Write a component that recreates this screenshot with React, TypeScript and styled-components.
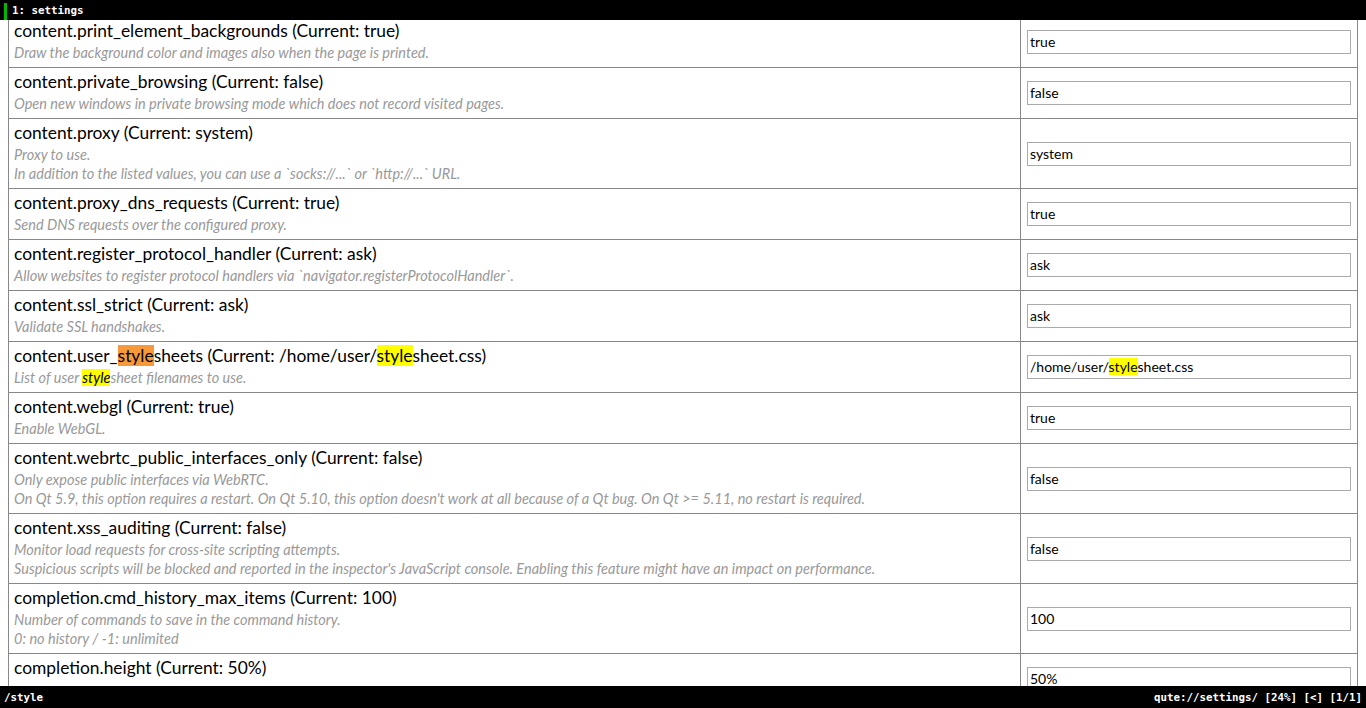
import React from 'react'
import styled, { createGlobalStyle } from 'styled-components'

type Mark = 'none' | 'current' | 'match'
type Piece = [string, Mark]

interface Setting {
  name: Piece[]
  desc: Piece[][]
  value: Piece[]
}

const t = (s: string): Piece[] => [[s, 'none']]

const settings: Setting[] = [
  {
    name: t('content.print_element_backgrounds (Current: true)'),
    desc: [t('Draw the background color and images also when the page is printed.')],
    value: t('true'),
  },
  {
    name: t('content.private_browsing (Current: false)'),
    desc: [t('Open new windows in private browsing mode which does not record visited pages.')],
    value: t('false'),
  },
  {
    name: t('content.proxy (Current: system)'),
    desc: [
      t('Proxy to use.'),
      t('In addition to the listed values, you can use a `socks://...` or `http://...` URL.'),
    ],
    value: t('system'),
  },
  {
    name: t('content.proxy_dns_requests (Current: true)'),
    desc: [t('Send DNS requests over the configured proxy.')],
    value: t('true'),
  },
  {
    name: t('content.register_protocol_handler (Current: ask)'),
    desc: [t('Allow websites to register protocol handlers via `navigator.registerProtocolHandler`.')],
    value: t('ask'),
  },
  {
    name: t('content.ssl_strict (Current: ask)'),
    desc: [t('Validate SSL handshakes.')],
    value: t('ask'),
  },
  {
    name: [
      ['content.user_', 'none'],
      ['style', 'current'],
      ['sheets (Current: /home/user/', 'none'],
      ['style', 'match'],
      ['sheet.css)', 'none'],
    ],
    desc: [
      [
        ['List of user ', 'none'],
        ['style', 'match'],
        ['sheet filenames to use.', 'none'],
      ],
    ],
    value: [
      ['/home/user/', 'none'],
      ['style', 'match'],
      ['sheet.css', 'none'],
    ],
  },
  {
    name: t('content.webgl (Current: true)'),
    desc: [t('Enable WebGL.')],
    value: t('true'),
  },
  {
    name: t('content.webrtc_public_interfaces_only (Current: false)'),
    desc: [
      t('Only expose public interfaces via WebRTC.'),
      t("On Qt 5.9, this option requires a restart. On Qt 5.10, this option doesn't work at all because of a Qt bug. On Qt >= 5.11, no restart is required."),
    ],
    value: t('false'),
  },
  {
    name: t('content.xss_auditing (Current: false)'),
    desc: [
      t('Monitor load requests for cross-site scripting attempts.'),
      t("Suspicious scripts will be blocked and reported in the inspector's JavaScript console. Enabling this feature might have an impact on performance."),
    ],
    value: t('false'),
  },
  {
    name: t('completion.cmd_history_max_items (Current: 100)'),
    desc: [
      t('Number of commands to save in the command history.'),
      t('0: no history / -1: unlimited'),
    ],
    value: t('100'),
  },
  {
    // the description of this row sits under the status bar
    name: t('completion.height (Current: 50%)'),
    desc: [],
    value: t('50%'),
  },
]

function Text({ pieces }: { pieces: Piece[] }) {
  return (
    <>
      {pieces.map(([s, m], i) =>
        m === 'none' ? <span key={i}>{s}</span> : <Hit key={i} $mark={m}>{s}</Hit>
      )}
    </>
  )
}

export default function App() {
  return (
    <>
      <GlobalStyle />
      <Window>
        <TabBar>
          <Indicator />
          <TabTitle>1: settings</TabTitle>
        </TabBar>
        <Viewport>
          <Table>
            <tbody>
              {settings.map((s, i) => (
                <Row key={i} $last={i === settings.length - 1}>
                  <NameCell>
                    <Title>
                      <Text pieces={s.name} />
                    </Title>
                    {s.desc.map((line, j) => (
                      <Desc key={j}>
                        <Text pieces={line} />
                      </Desc>
                    ))}
                  </NameCell>
                  <ValueCell>
                    <ValueBox>
                      <Text pieces={s.value} />
                    </ValueBox>
                  </ValueCell>
                </Row>
              ))}
            </tbody>
          </Table>
        </Viewport>
        <StatusBar>
          <span>/style</span>
          <span>qute://settings/ [24%] [&lt;] [1/1]</span>
        </StatusBar>
      </Window>
    </>
  )
}

const GlobalStyle = createGlobalStyle`
  html, body {
    margin: 0;
    padding: 0;
    background: #fff;
  }
`

const Window = styled.div`
  width: 1366px;
  height: 708px;
  display: flex;
  flex-direction: column;
  overflow: hidden;
`

const TabBar = styled.div`
  height: 20px;
  flex: none;
  background: #000;
  display: flex;
  align-items: stretch;
  padding-left: 4px;
`

const Indicator = styled.div`
  width: 3px;
  margin-top: 3px;
  background: #00b800;
`

const TabTitle = styled.div`
  color: #fff;
  font-family: 'DejaVu Sans Mono', monospace;
  font-weight: bold;
  font-size: 10.8px;
  line-height: 22px;
  padding-left: 5px;
`

const Viewport = styled.div`
  flex: 1;
  overflow: hidden;
`

const Table = styled.table`
  border-collapse: collapse;
  margin: -4px 0 0 8px;
  width: 1350px;
  table-layout: fixed;
`

const Row = styled.tr<{ $last: boolean }>`
  height: ${(p) => (p.$last ? '51px' : 'auto')};
`

const NameCell = styled.td`
  width: 1000px;
  border: 1px solid #888;
  padding: 2px 6px 5px 5px;
  vertical-align: top;
`

const ValueCell = styled.td`
  border: 1px solid #888;
  padding: 0 6px;
  vertical-align: middle;
`

const Title = styled.div`
  font-family: Lato, 'Open Sans', sans-serif;
  font-size: 17.4px;
  line-height: 24px;
  color: #000;
  white-space: nowrap;
`

const Desc = styled.div`
  font-family: Lato, 'Open Sans', sans-serif;
  font-style: italic;
  font-size: 14.5px;
  line-height: 19px;
  color: #999;
  white-space: nowrap;
`

const Hit = styled.span<{ $mark: Mark }>`
  background: ${(p) => (p.$mark === 'current' ? '#f5993b' : '#ffff00')};
  color: #000;
`

const ValueBox = styled.div`
  height: 24px;
  box-sizing: border-box;
  border: 1px solid #aaa;
  padding: 0 2px;
  font-family: Lato, 'Open Sans', sans-serif;
  font-size: 14px;
  line-height: 22px;
  color: #000;
  white-space: nowrap;
  overflow: hidden;
`

const StatusBar = styled.div`
  height: 22px;
  flex: none;
  background: #000;
  color: #fff;
  display: flex;
  justify-content: space-between;
  align-items: center;
  padding: 0 4px;
  font-family: 'DejaVu Sans Mono', monospace;
  font-weight: bold;
  font-size: 10.8px;
`
